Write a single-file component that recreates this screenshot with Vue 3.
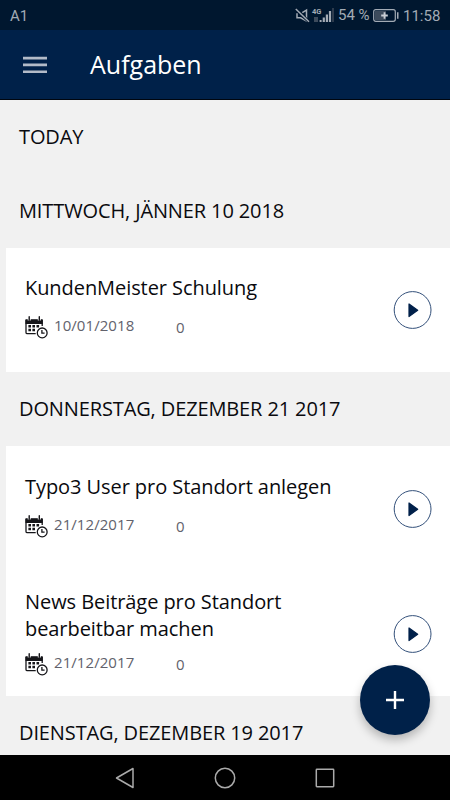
<script setup>
const groups = [
  { day: 'TODAY', tasks: [] },
  { day: 'MITTWOCH, JÄNNER 10 2018', tasks: [{ title: ['KundenMeister Schulung'], date: '10/01/2018', count: 0 }] },
  {
    day: 'DONNERSTAG, DEZEMBER 21 2017',
    tasks: [
      { title: ['Typo3 User pro Standort anlegen'], date: '21/12/2017', count: 0 },
      { title: ['News Beiträge pro Standort', 'bearbeitbar machen'], date: '21/12/2017', count: 0 },
    ],
  },
  { day: 'DIENSTAG, DEZEMBER 19 2017', tasks: [] },
]
</script>

<template>
  <div class="screen">
    <div class="status">
      <span class="carrier">A1</span>
      <svg class="mute" width="15" height="15" viewBox="0 0 15 15" fill="none" stroke="#a3abb5" stroke-width="1.5">
        <path d="M2 5.3v4.5h3.6l5.9 3.2V2L7.3 4.6" />
        <path d="M.8 1 14 13.8" stroke="#00172f" stroke-width="3" />
        <path d="M.8 1 14 13.8" />
      </svg>
      <div class="signal">
        <span class="net">4G</span>
        <svg width="22" height="15" viewBox="0 0 22 15" fill="#a3abb5">
          <path d="M2 9h4v5H2z" fill="#3d4b5c" />
          <path d="M7.6 12h2v2h-2zM10.7 9.5h2.2V14h-2.2zM13.8 6.5H16V14h-2.2zM16.9 3h2.2v11h-2.2z" />
          <path d="M20 0h2v14h-2z" fill="#2d3b4d" />
        </svg>
      </div>
      <span class="percent">54 %</span>
      <svg class="battery" width="26" height="13" viewBox="0 0 26 13">
        <rect x="2" y="2" width="11" height="9" fill="#3d4b5c" />
        <rect x=".7" y=".7" width="21.6" height="11.6" rx="2" fill="none" stroke="#a3abb5" stroke-width="1.2" />
        <path d="M24 3.2h1.5v6.6H24z" fill="#a3abb5" />
        <path d="M11.5 3.2v6.6M8.2 6.5h6.6" stroke="#c8cdd4" stroke-width="1.8" />
      </svg>
      <span class="clock">11:58</span>
    </div>

    <header class="bar">
      <svg width="24" height="18" viewBox="0 0 24 18" fill="#b3bbc8">
        <path d="M0 .8h24v2.6H0zM0 7.6h24v2.6H0zM0 14.4h24V17H0z" />
      </svg>
      <h1>Aufgaben</h1>
    </header>

    <main class="list">
      <section v-for="group in groups" :key="group.day">
        <h2>{{ group.day }}</h2>
        <div v-if="group.tasks.length" class="card">
          <article v-for="task in group.tasks" :key="task.title[0]" class="task" :class="{ tall: task.title.length > 1 }">
            <div class="info">
              <h3><span v-for="line in task.title" :key="line">{{ line }}</span></h3>
              <div class="meta">
                <svg class="cal" width="24" height="24" viewBox="0 0 24 24">
                  <path d="M.5 3.2h17.2V8H.5z" fill="#151519" />
                  <path d="M1 4v12.4q0 1.3 1.3 1.3h8.4M17.2 4v6" fill="none" stroke="#151519" stroke-width="1.3" />
                  <path d="M4.2 0v4.4M14.3 0v4.4" stroke="#fff" stroke-width="3" />
                  <path d="M4.2 .7v3.6M14.3 .7v3.6" stroke="#151519" stroke-width="1.4" stroke-linecap="round" />
                  <path d="M3.4 9h2.6v2.4H3.4zM7.4 9H10v2.4H7.4zM11.5 9h2.6v2.4h-2.6zM3.4 12.8h2.6v2.4H3.4zM7.4 12.8H10v2.4H7.4z" fill="#151519" />
                  <circle cx="17.2" cy="16.9" r="6" fill="#fff" />
                  <circle cx="17.2" cy="16.9" r="4.9" fill="#fff" stroke="#151519" stroke-width="1.3" />
                  <path d="M16.9 14v3.1h2.7" fill="none" stroke="#151519" stroke-width="1.3" />
                </svg>
                <span class="date">{{ task.date }}</span>
                <span class="count">{{ task.count }}</span>
              </div>
            </div>
            <svg class="play" width="38" height="38" viewBox="0 0 38 38">
              <circle cx="18.6" cy="19" r="18.4" fill="none" stroke="#33507a" stroke-width="1" />
              <path d="M15 13v12.6l8.7-6.3z" fill="#00204a" stroke="#00204a" stroke-width="1.2" stroke-linejoin="round" />
            </svg>
          </article>
        </div>
      </section>
      <button class="fab" aria-label="+">
        <svg width="18" height="18" viewBox="0 0 18 18"><path d="M9 0v18M0 9h18" stroke="#fff" stroke-width="2.4" /></svg>
      </button>
    </main>

    <nav class="nav">
      <svg width="22" height="22" viewBox="0 0 22 22"><path d="M2.5 11 19 1.5v19z" /></svg>
      <svg width="22" height="22" viewBox="0 0 22 22"><circle cx="11" cy="11" r="9.7" /></svg>
      <svg width="22" height="22" viewBox="0 0 22 22"><rect x="2.3" y="2.3" width="17.4" height="17.4" rx=".6" /></svg>
    </nav>
  </div>
</template>

<style>
body { margin: 0; background: #000; }
</style>

<style scoped>
.screen {
  width: 450px;
  height: 800px;
  display: flex;
  flex-direction: column;
  overflow: hidden;
  font-family: "Open Sans", sans-serif;
  color: #0a0a0e;
}
h1, h2, h3 { margin: 0; font-weight: 400; }
svg { display: block; flex: none; overflow: visible; }
.status {
  flex: none;
  height: 30px;
  box-sizing: border-box;
  padding: 0 10px;
  display: flex;
  align-items: center;
  background: #00172f;
  color: #a3abb5;
  font: 15px/30px Roboto, sans-serif;
  white-space: nowrap;
}
.carrier { flex: 1; padding-top: 1px; }
.mute { margin-right: 2px; }
.signal { width: 23px; height: 15px; margin-right: 3px; display: grid; }
.signal > * { grid-area: 1 / 1; }
.net { font: bold 7.5px/8px Roboto, sans-serif; }
.percent { width: 32px; margin-right: 3px; }
.battery { margin-right: 4px; }
.clock { width: 37px; font-size: 15px; padding-top: 1px; }
.bar {
  flex: none;
  height: 70px;
  box-sizing: border-box;
  padding-left: 23px;
  display: flex;
  align-items: center;
  gap: 43px;
  background: #002149;
  border-bottom: 1px solid #00060f;
}
.bar h1 { padding-bottom: 2px; font-size: 25px; line-height: 34px; color: #fff; }
.list {
  position: relative;
  flex: none;
  height: 655px;
  background: #f1f1f1;
  overflow: hidden;
}
.list h2 {
  box-sizing: border-box;
  height: 73.8px;
  padding-left: 19px;
  font-size: 20px;
  line-height: 73px;
  letter-spacing: -.12px;
}
.card { margin-left: 6px; background: #fff; }
.task {
  height: 124.8px;
  box-sizing: border-box;
  padding: 0 18px 0 19px;
  display: flex;
  align-items: center;
  justify-content: space-between;
}
.info { align-self: flex-start; padding-top: 26.7px; }
.tall .info { padding-top: 16.8px; }
h3 { font-size: 20px; line-height: 27px; letter-spacing: -.07px; }
h3 span { display: block; }
.meta { display: flex; align-items: flex-start; padding-top: 14px; color: #62626c; font-size: 15px; line-height: 20px; }
.tall .meta { padding-top: 10.4px; }
.cal { margin-top: 1px; }
.date { width: 122px; padding-left: 5px; letter-spacing: .07px; }
.meta .count { padding-top: 2px; }
.tall .play { margin-top: 1px; }
.fab {
  position: absolute;
  right: 20px;
  bottom: 20px;
  width: 70px;
  height: 70px;
  padding: 0;
  border: 0;
  border-radius: 50%;
  display: grid;
  place-items: center;
  background: #002149;
  box-shadow: 0 5px 10px rgba(0, 0, 0, .25);
}
.nav {
  flex: none;
  height: 45px;
  display: flex;
  align-items: center;
  justify-content: center;
  gap: 78px;
  background: #000;
}
.nav svg { fill: none; stroke: #aaa; stroke-width: 1.5; stroke-linejoin: round; }
</style>
